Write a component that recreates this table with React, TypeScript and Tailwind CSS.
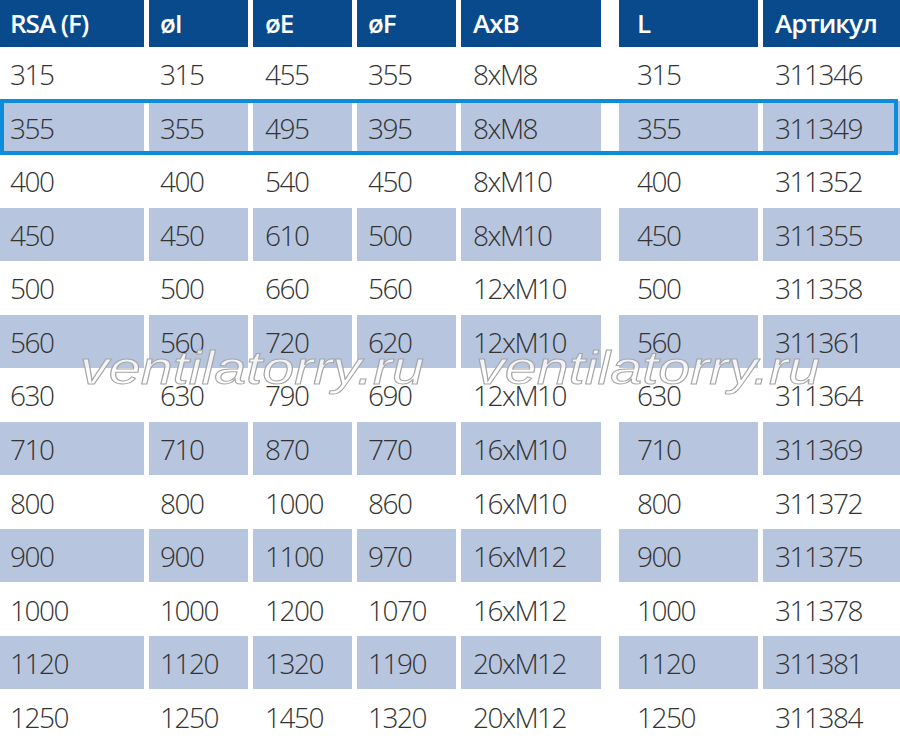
const headers = ["RSA (F)", "øI", "øE", "øF", "AxB", "L", "Артикул"];

const rows: string[][] = [
  ["315", "315", "455", "355", "8xM8", "315", "311346"],
  ["355", "355", "495", "395", "8xM8", "355", "311349"],
  ["400", "400", "540", "450", "8xM10", "400", "311352"],
  ["450", "450", "610", "500", "8xM10", "450", "311355"],
  ["500", "500", "660", "560", "12xM10", "500", "311358"],
  ["560", "560", "720", "620", "12xM10", "560", "311361"],
  ["630", "630", "790", "690", "12xM10", "630", "311364"],
  ["710", "710", "870", "770", "16xM10", "710", "311369"],
  ["800", "800", "1000", "860", "16xM10", "800", "311372"],
  ["900", "900", "1100", "970", "16xM12", "900", "311375"],
  ["1000", "1000", "1200", "1070", "16xM12", "1000", "311378"],
  ["1120", "1120", "1320", "1190", "20xM12", "1120", "311381"],
  ["1250", "1250", "1450", "1320", "20xM12", "1250", "311384"],
];

// widths and left paddings per column
const cols = [
  "w-[144px] pl-[10px]",
  "w-[99px] pl-[11px]",
  "w-[99px] pl-[12px]",
  "w-[99px] pl-[11px]",
  "w-[140px] pl-[12px]",
  "w-[139px] pl-[18px] ml-[13px]",
  "w-[137px] pl-[12px]",
];

function Watermark({ className }: { className: string }) {
  return (
    <span
      className={
        "absolute top-[345px] origin-left scale-x-125 italic text-[46px] leading-none text-white/80 pointer-events-none [-webkit-text-stroke:1px_#a6a6a6] " +
        className
      }
      style={{ fontFamily: '"Liberation Sans", Arial, sans-serif' }}
    >
      ventilatorry.ru
    </span>
  );
}

export default function App() {
  return (
    <div
      className="relative w-[900px] h-[743px] bg-white grid grid-rows-[47px_repeat(13,1fr)] overflow-hidden"
      style={{ fontFamily: '"Open Sans", "Noto Sans", sans-serif' }}
    >
      <div className="flex gap-[5px]">
        {headers.map((h, i) => (
          <div
            key={h}
            className={`${cols[i]} bg-[#084a8b] text-white text-[26px] font-semibold tracking-[-1px] flex items-center`}
          >
            {h}
          </div>
        ))}
      </div>

      {rows.map((r, ri) => {
        const shaded = ri % 2 === 1;
        return (
          <div key={r[6]} className="relative flex gap-[5px]">
            {r.map((c, ci) => (
              <div
                key={ci}
                className={`${cols[ci]} ${shaded ? "bg-[#b8c5de]" : ""} text-[#333333] text-[28px] font-light tracking-[-1.5px] flex items-center pt-[1px]`}
              >
                {c}
              </div>
            ))}
            {ri === 1 && (
              <div className="absolute left-0 w-[898px] -top-[2px] -bottom-[1px] border-[4px] border-[#0b8ddc]" />
            )}
          </div>
        );
      })}

      <Watermark className="left-[80px]" />
      <Watermark className="left-[476px]" />
    </div>
  );
}
